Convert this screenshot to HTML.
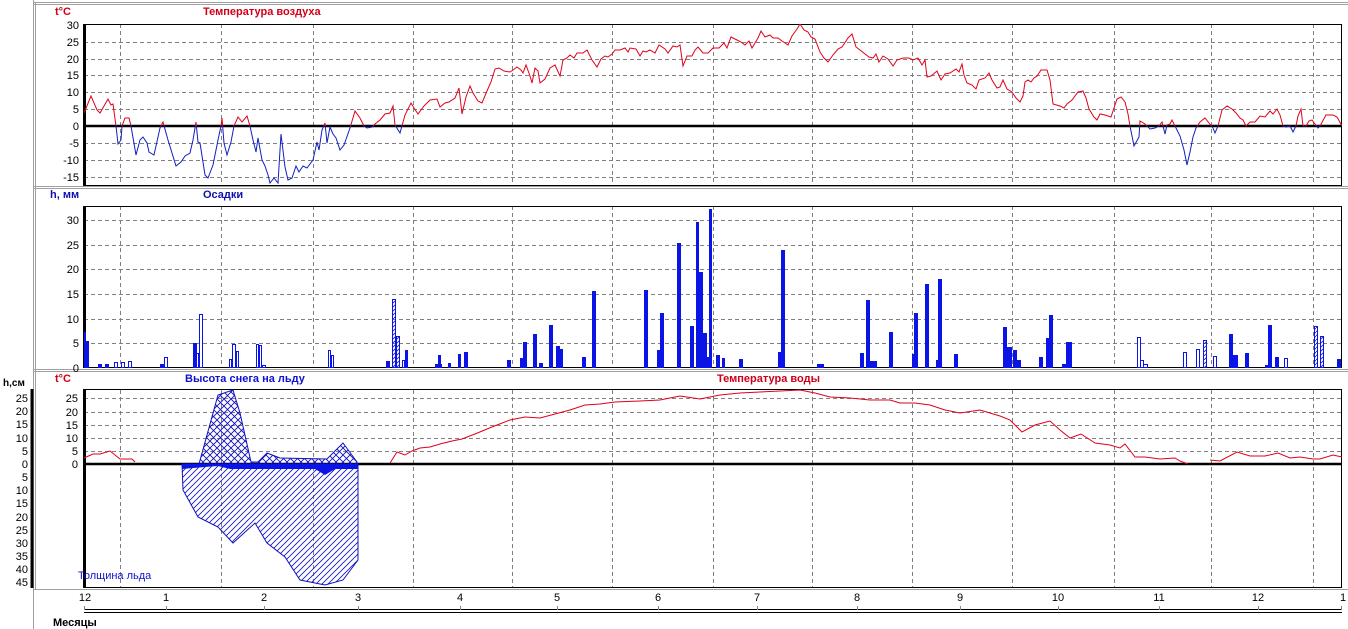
<!DOCTYPE html>
<html><head><meta charset="utf-8"><style>
html,body{margin:0;padding:0;background:#fff;width:1348px;height:629px;overflow:hidden}
svg{display:block;font-family:"Liberation Sans",sans-serif}
</style></head><body>
<svg width="1348" height="629" viewBox="0 0 1348 629" xmlns="http://www.w3.org/2000/svg">
<defs>
<pattern id="diag" width="6" height="6" patternUnits="userSpaceOnUse"><path d="M-1,7 L7,-1 M-4,4 L4,-4 M2,10 L10,2" stroke="#1010c0" stroke-width="0.8"/></pattern>
<pattern id="cross" width="7" height="7" patternUnits="userSpaceOnUse"><path d="M0,0 L7,7 M7,0 L0,7" stroke="#1010c0" stroke-width="0.9"/></pattern>
<pattern id="hb" width="4" height="4" patternUnits="userSpaceOnUse"><path d="M0,4 L4,0" stroke="#1010d0" stroke-width="0.8"/></pattern>
<clipPath id="up"><rect x="84" y="24" width="1258" height="102"/></clipPath>
<clipPath id="dn"><rect x="84" y="126" width="1258" height="59"/></clipPath>
<polyline id="tl" fill="none" stroke-width="1" points="84,113 91,96 97,110 100,113 104,106 108,99 111,105 113,104 116,126 118,144 121,140 122,126 125,118 129,118 131,126 136,155 140,140 143,137 147,143 149,152 154,155 160,128 163,122 168,140 176,166 181,162 185,156 190,153 193,140 196,122 198,142 200,143 205,175 208,178 213,165 218,140 221,126 222,118 224,143 227,155 231,142 234,126 238,117 242,122 247,116 250,126 253,140 256,152 258,138 262,160 265,166 268,175 270,183 274,178 278,183 281,134 285,167 288,180 292,178 296,166 299,172 303,166 307,168 313,160 317,142 319,150 322,130 325,123 327,143 330,127 333,134 336,138 340,150 344,145 350,128 355,111 360,118 364,126 367,128 372,127 375,124 380,120 385,114 390,113 393,106 395,125 400,133 405,115 411,103 414,108 418,114 424,106 430,100 437,99 440,107 445,103 449,102 455,98 459,88 462,114 466,97 470,86 473,93 478,101 482,103 487,91 491,82 495,69 499,68 504,71 510,72 513,70 517,67 521,70 523,73 526,65 530,76 532,83 535,68 538,71 540,83 545,79 550,68 555,65 560,76 563,60 567,58 570,55 574,58 577,53 583,53 587,50 592,60 597,67 601,59 605,56 608,57 612,54 615,50 620,50 625,48 628,52 630,48 636,49 640,56 643,51 646,52 650,50 655,53 659,45 665,49 668,53 673,46 677,47 680,45 683,66 687,56 692,56 695,50 698,47 703,53 708,53 713,48 719,48 724,43 727,48 731,37 737,40 741,42 745,45 749,41 752,48 758,38 761,31 765,37 770,35 773,38 778,38 782,41 788,45 792,36 797,29 800,24 804,30 808,32 811,37 815,39 820,52 824,58 828,62 833,55 838,49 842,47 848,38 852,34 856,47 860,50 865,54 869,57 873,58 876,54 879,62 883,56 888,59 893,66 897,60 903,58 909,58 913,60 918,58 922,65 925,60 927,77 931,76 937,71 941,80 945,74 950,73 956,69 959,72 962,64 964,75 967,83 972,85 976,89 979,80 985,78 989,73 992,80 997,88 1000,87 1003,80 1007,89 1012,92 1016,98 1020,102 1023,96 1025,82 1028,80 1031,82 1034,78 1037,76 1041,70 1047,70 1050,80 1053,104 1060,106 1064,108 1067,104 1072,100 1078,92 1083,91 1086,98 1089,109 1094,117 1097,120 1100,114 1105,115 1111,117 1114,108 1117,99 1121,97 1125,102 1128,114 1130,126 1134,146 1139,137 1140,121 1145,124 1150,129 1155,128 1159,126 1162,122 1165,134 1167,125 1170,124 1172,120 1175,126 1180,136 1184,150 1187,165 1190,152 1193,137 1196,128 1200,122 1205,118 1209,123 1213,128 1215,133 1218,126 1222,110 1227,106 1232,109 1236,113 1240,118 1243,120 1246,126 1250,122 1255,122 1260,116 1265,117 1270,111 1273,114 1277,109 1280,115 1283,126 1286,127 1290,126 1293,132 1296,126 1298,116 1301,109 1303,126 1306,126 1309,121 1312,120 1315,124 1318,128 1320,126 1326,115 1333,115 1337,117 1342,126"/>
</defs>
<!-- frames -->
<g stroke="#a0a0a0" fill="none" stroke-width="1">
<line x1="34" y1="2.5" x2="1348" y2="2.5"/><line x1="34" y1="4.5" x2="1348" y2="4.5"/>
<line x1="33.5" y1="0" x2="33.5" y2="629"/><line x1="35.5" y1="3" x2="35.5" y2="590"/>
<line x1="34" y1="186.5" x2="1348" y2="186.5"/><line x1="34" y1="188.5" x2="1348" y2="188.5"/>
<line x1="34" y1="369.5" x2="1348" y2="369.5"/><line x1="34" y1="371.5" x2="1348" y2="371.5"/>
<line x1="34" y1="589.5" x2="1348" y2="589.5"/>
</g>
<!-- grids -->
<g stroke="#808080" stroke-dasharray="4,3" stroke-width="1">
<path d="M84,42.5H1342M84,59.5H1342M84,75.5H1342M84,92.5H1342M84,109.5H1342M84,143.5H1342M84,160.5H1342M84,177.5H1342"/>
<path d="M84,220.5H1342M84,245.5H1342M84,269.5H1342M84,294.5H1342M84,319.5H1342M84,343.5H1342"/>
<path d="M84,398.5H1342M84,412.5H1342M84,425.5H1342M84,438.5H1342M84,451.5H1342"/>
<path d="M120.5,24V185M221.5,24V185M313.5,24V185M413.5,24V185M512.5,24V185M612.5,24V185M713.5,24V185M812.5,24V185M912.5,24V185M1012.5,24V185M1114.5,24V185M1211.5,24V185M1313.5,24V185"/>
<path d="M120.5,206V368M221.5,206V368M313.5,206V368M413.5,206V368M512.5,206V368M612.5,206V368M713.5,206V368M812.5,206V368M912.5,206V368M1012.5,206V368M1114.5,206V368M1211.5,206V368M1313.5,206V368"/>
<path d="M120.5,390V587M221.5,390V587M313.5,390V587M413.5,390V587M512.5,390V587M612.5,390V587M713.5,390V587M812.5,390V587M912.5,390V587M1012.5,390V587M1114.5,390V587M1211.5,390V587M1313.5,390V587"/>
</g>
<!-- plot boxes -->
<g fill="none" stroke="#000" stroke-width="1">
<rect x="84.5" y="24.5" width="1257" height="161"/>
<rect x="84.5" y="206.5" width="1257" height="161"/>
<rect x="84.5" y="389.5" width="1257" height="198"/>
</g>
<g stroke="#000" stroke-width="3">
<line x1="84.5" y1="24" x2="84.5" y2="186"/><line x1="84.5" y1="206" x2="84.5" y2="368"/><line x1="84.5" y1="389" x2="84.5" y2="588"/>
<line x1="32" y1="389" x2="32" y2="588"/>
</g>
<line x1="84" y1="126" x2="1342" y2="126" stroke="#000" stroke-width="2.5"/>
<line x1="84" y1="464" x2="1342" y2="464" stroke="#000" stroke-width="2.5"/>
<!-- air temp -->
<g clip-path="url(#up)"><use href="#tl" stroke="#e0001a"/></g>
<g clip-path="url(#dn)"><use href="#tl" stroke="#1020c0"/></g>
<!-- precip bars -->
<g fill="#0a14e6">
<rect x="84" y="332" width="2" height="36"/><rect x="86" y="341" width="3" height="27"/>
<rect x="98" y="364" width="4" height="4"/><rect x="105" y="364" width="4" height="4"/>
<rect x="160" y="364" width="4" height="4"/><rect x="193" y="343" width="4" height="25"/>
<rect x="386" y="361" width="4" height="7"/><rect x="405" y="350" width="3" height="18"/>
<rect x="435" y="364" width="7" height="4"/><rect x="438" y="355" width="3" height="13"/>
<rect x="448" y="363" width="3" height="5"/><rect x="458" y="354" width="3" height="14"/><rect x="464" y="352" width="4" height="16"/>
<rect x="507" y="360" width="4" height="8"/><rect x="520" y="358" width="7" height="10"/><rect x="523" y="342" width="4" height="26"/>
<rect x="533" y="334" width="4" height="34"/><rect x="539" y="363" width="4" height="5"/><rect x="549" y="325" width="4" height="43"/>
<rect x="556" y="346" width="4" height="22"/><rect x="559" y="349" width="4" height="19"/>
<rect x="582" y="357" width="4" height="11"/><rect x="592" y="291" width="4" height="77"/>
<rect x="644" y="290" width="4" height="78"/><rect x="657" y="350" width="4" height="18"/><rect x="660" y="313" width="4" height="55"/>
<rect x="677" y="243" width="4" height="125"/><rect x="690" y="326" width="4" height="42"/><rect x="696" y="222" width="3" height="146"/>
<rect x="699" y="272" width="4" height="96"/><rect x="703" y="333" width="4" height="35"/><rect x="707" y="357" width="2" height="11"/>
<rect x="709" y="209" width="3" height="159"/><rect x="716" y="355" width="4" height="13"/><rect x="722" y="358" width="3" height="10"/>
<rect x="739" y="359" width="4" height="9"/><rect x="778" y="352" width="4" height="16"/><rect x="781" y="250" width="4" height="118"/>
<rect x="817" y="364" width="7" height="4"/><rect x="860" y="353" width="4" height="15"/><rect x="866" y="300" width="4" height="68"/>
<rect x="870" y="361" width="7" height="7"/><rect x="889" y="332" width="4" height="36"/><rect x="912" y="354" width="6" height="14"/>
<rect x="914" y="313" width="4" height="55"/><rect x="925" y="284" width="4" height="84"/><rect x="936" y="360" width="3" height="8"/>
<rect x="938" y="279" width="4" height="89"/><rect x="954" y="354" width="4" height="14"/><rect x="1003" y="327" width="4" height="41"/>
<rect x="1007" y="347" width="5" height="21"/><rect x="1013" y="350" width="4" height="18"/><rect x="1017" y="360" width="4" height="8"/>
<rect x="1039" y="357" width="4" height="11"/><rect x="1046" y="338" width="4" height="30"/><rect x="1049" y="315" width="4" height="53"/>
<rect x="1062" y="364" width="5" height="4"/><rect x="1066" y="342" width="6" height="26"/>
<rect x="1229" y="334" width="4" height="34"/><rect x="1233" y="355" width="5" height="13"/><rect x="1245" y="353" width="4" height="15"/>
<rect x="1265" y="365" width="4" height="3"/><rect x="1268" y="325" width="4" height="43"/><rect x="1275" y="357" width="4" height="11"/>
<rect x="1337" y="359" width="4" height="9"/>
</g>
<g fill="#fff" stroke="#0a14e6" stroke-width="1">
<rect x="114.5" y="362.5" width="3" height="5"/><rect x="121.5" y="362.5" width="3" height="5"/><rect x="128.5" y="361.5" width="3" height="6"/>
<rect x="164.5" y="357.5" width="3" height="10"/><rect x="196.5" y="353.5" width="2" height="14"/><rect x="199.5" y="314.5" width="3" height="53"/>
<rect x="229.5" y="359.5" width="2" height="8"/><rect x="232.5" y="344.5" width="3" height="23"/><rect x="236.5" y="351.5" width="2" height="16"/>
<rect x="256.5" y="344.5" width="2" height="23"/><rect x="259.5" y="345.5" width="2" height="22"/><rect x="262.5" y="365.5" width="3" height="2"/>
<rect x="328.5" y="350.5" width="2" height="17"/><rect x="331.5" y="355.5" width="2" height="12"/><rect x="402.5" y="360.5" width="2" height="7"/>
<rect x="1137.5" y="337.5" width="3" height="30"/><rect x="1140.5" y="360.5" width="3" height="7"/><rect x="1143.5" y="364.5" width="4" height="3"/>
<rect x="1183.5" y="352.5" width="3" height="15"/><rect x="1196.5" y="349.5" width="3" height="18"/><rect x="1213.5" y="356.5" width="3" height="11"/>
<rect x="1284.5" y="358.5" width="3" height="9"/>
</g>
<g fill="url(#hb)" stroke="#0a14e6" stroke-width="1">
<rect x="392.5" y="299.5" width="3" height="68"/><rect x="396.5" y="336.5" width="3" height="31"/>
<rect x="1203.5" y="340.5" width="3" height="27"/><rect x="1314.5" y="326.5" width="3" height="41"/><rect x="1320.5" y="336.5" width="3" height="31"/>
</g>
<!-- snow & ice -->
<polygon points="182,464 183,490 198,517 218,527 233,543 255,523 267,543 285,557 300,580 325,585 343,580 358,560 358,464" fill="url(#diag)" stroke="#1010c0" stroke-width="1"/>
<polygon points="199,464 218,395 233,390 240,413 251,462 258,462 267,453 280,458 327,459 343,443 357,462 357,464" fill="url(#cross)" stroke="#1010c0" stroke-width="1"/>
<polygon points="182,464 358,464 358,469 335,469 325,475 315,469 230,469 218,466 205,467 182,469" fill="#0a14e6"/>
<!-- water temp -->
<g fill="none" stroke="#e0001a" stroke-width="1">
<polyline points="84,458 93,454 100,454 110,451 120,459 132,459 135,462"/>
<polyline points="390,463 397,452 405,455 412,451 420,448 430,447 440,444 452,441 462,439 475,434 487,429 497,425 510,420 525,417 540,418 555,414 570,410 585,405 600,404 615,402 640,401 660,400 680,396 700,399 720,395 740,393 760,392 780,391 800,390 815,393 830,397 850,398 870,400 890,400 900,403 915,403 930,405 945,410 960,413 980,410 1000,416 1010,420 1022,432 1035,425 1050,421 1060,430 1070,438 1081,434 1095,443 1110,445 1120,448 1125,444 1135,457 1145,457 1160,459 1175,458 1180,461 1188,464"/>
<polyline points="1210,460 1220,461 1237,452 1250,456 1265,456 1278,453 1290,458 1300,457 1313,459 1320,459 1333,455 1342,457"/>
</g>
<!-- labels -->
<g font-size="11" font-weight="bold">
<text x="55" y="15" fill="#d0001a">t°C</text>
<text x="203" y="15" fill="#d0001a">Температура воздуха</text>
<text x="50" y="198" fill="#1010b0">h, мм</text>
<text x="203" y="198" fill="#1010b0">Осадки</text>
<text x="55" y="382" fill="#d0001a">t°C</text>
<text x="185" y="382" fill="#1010d0">Высота снега на льду</text>
<text x="717" y="382" fill="#d0001a">Температура воды</text>
<text x="78" y="579" fill="#1010d0" font-weight="normal">Толщина льда</text>
<text x="3" y="386" fill="#000" font-size="10">h,см</text>
<text x="53" y="626" fill="#000">Месяцы</text>
</g>
<g font-size="11" fill="#000" text-anchor="end">
<text x="79" y="29">30</text><text x="79" y="46">25</text><text x="79" y="63">20</text><text x="79" y="79">15</text><text x="79" y="96">10</text><text x="79" y="113">5</text><text x="79" y="130">0</text><text x="79" y="147">-5</text><text x="79" y="164">-10</text><text x="79" y="181">-15</text>
<text x="79" y="224">30</text><text x="79" y="249">25</text><text x="79" y="273">20</text><text x="79" y="298">15</text><text x="79" y="323">10</text><text x="79" y="347">5</text><text x="79" y="372">0</text>
<text x="78" y="402">25</text><text x="78" y="416">20</text><text x="78" y="429">15</text><text x="78" y="442">10</text><text x="78" y="455">5</text><text x="78" y="468">0</text>
<text x="28" y="402">25</text><text x="28" y="415">20</text><text x="28" y="428">15</text><text x="28" y="442">10</text><text x="28" y="455">5</text><text x="28" y="468">0</text><text x="28" y="481">5</text><text x="28" y="494">10</text><text x="28" y="507">15</text><text x="28" y="521">20</text><text x="28" y="534">25</text><text x="28" y="547">30</text><text x="28" y="560">35</text><text x="28" y="573">40</text><text x="28" y="586">45</text>
</g>
<g font-size="11" fill="#000" text-anchor="middle">
<text x="85" y="601">12</text><text x="166" y="601">1</text><text x="264" y="601">2</text><text x="358" y="601">3</text><text x="460" y="601">4</text><text x="557" y="601">5</text><text x="658" y="601">6</text><text x="757" y="601">7</text><text x="857" y="601">8</text><text x="960" y="601">9</text><text x="1058" y="601">10</text><text x="1159" y="601">11</text><text x="1258" y="601">12</text><text x="1343" y="601">1</text>
</g>
<g stroke="#000" stroke-width="1">
<line x1="84" y1="609.5" x2="1342" y2="609.5"/><line x1="84" y1="612.5" x2="1342" y2="612.5"/>
<path d="M84.5,606V610M166.5,606V610M264.5,606V610M358.5,606V610M460.5,606V610M557.5,606V610M658.5,606V610M757.5,606V610M857.5,606V610M960.5,606V610M1058.5,606V610M1159.5,606V610M1258.5,606V610M1341.5,606V610" stroke="#888"/>
</g>
</svg>
</body></html>
